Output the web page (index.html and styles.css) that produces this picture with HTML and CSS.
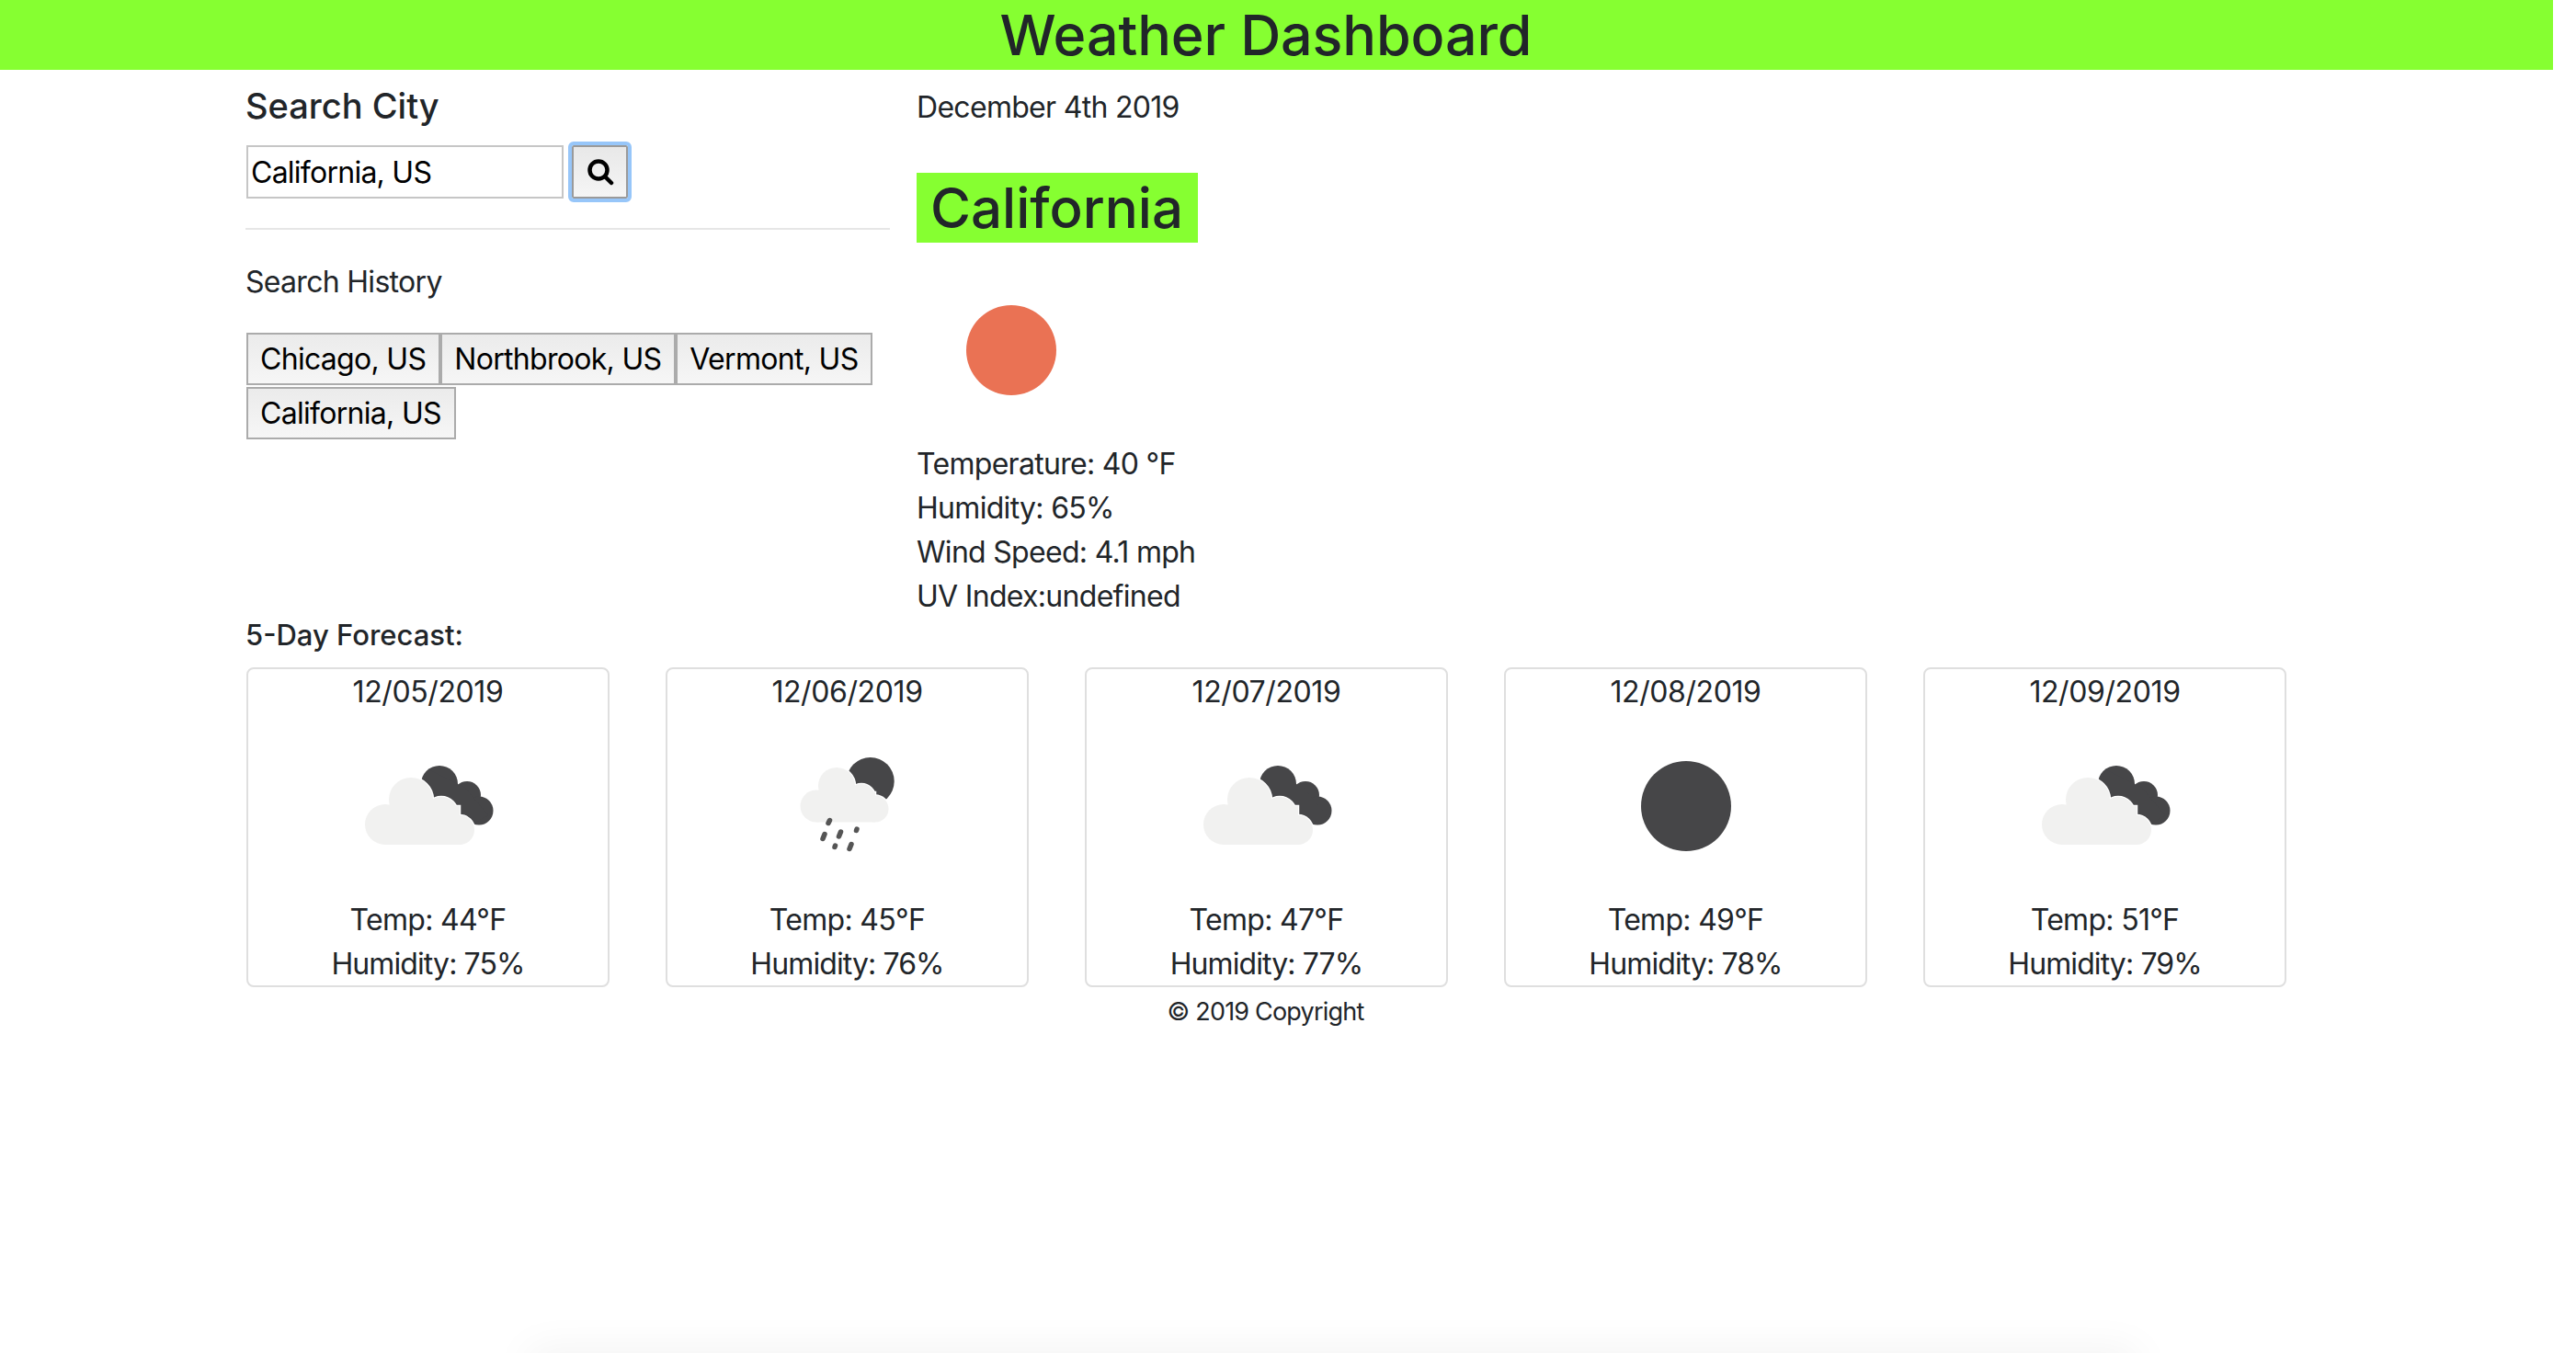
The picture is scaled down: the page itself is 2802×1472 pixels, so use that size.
FILE: index.html
```html
<!DOCTYPE html>
<html lang="en">
<head>
<meta charset="utf-8">
<title>Weather Dashboard</title>
<link rel="stylesheet" href="styles.css">
</head>
<body>
<svg class="sprites" width="0" height="0" aria-hidden="true">
  <defs>
    <g id="cloud-shape">
      <circle cx="53" cy="120" r="22"/><circle cx="81" cy="93" r="24"/><circle cx="114" cy="108" r="18"/><circle cx="134" cy="126" r="16"/>
      <rect x="53" y="100" width="81" height="42"/>
    </g>
    <symbol id="icon-clouds" viewBox="0 0 200 200">
      <g class="dark"><circle cx="112" cy="76" r="20"/><circle cx="142" cy="88" r="15"/><circle cx="155" cy="105" r="15.5"/><polygon points="100,60 140,80 165,110 130,130 90,100"/></g>
      <use href="#cloud-shape" class="halo"/>
      <use href="#cloud-shape" class="light"/>
    </symbol>
    <g id="rain-cloud-shape">
      <circle cx="66" cy="100" r="17.5"/><circle cx="88" cy="78" r="20"/><circle cx="115" cy="91" r="15"/><circle cx="130" cy="103" r="14.5"/>
      <rect x="66" y="85" width="64" height="32.5"/>
    </g>
    <symbol id="icon-rain" viewBox="0 0 200 200">
      <circle class="dark" cx="124.7" cy="73" r="26"/>
      <use href="#rain-cloud-shape" class="halo"/>
      <use href="#rain-cloud-shape" class="light"/>
      <g class="drops">
        <line x1="80.5" y1="115.5" x2="79" y2="118.5"/><line x1="75" y1="130.5" x2="73" y2="135.5"/><line x1="92.5" y1="128" x2="90.5" y2="133"/>
        <line x1="110" y1="125" x2="109.5" y2="126.5"/><line x1="86.5" y1="143" x2="86" y2="144.5"/><line x1="104" y1="141.5" x2="102" y2="146.5"/>
      </g>
    </symbol>
  </defs>
</svg>
<div class="page">
  <header class="banner"><h1 class="banner-title">Weather Dashboard</h1></header>
  <main class="content">
    <div class="top">
      <aside class="side">
        <h2 class="side-title">Search City</h2>
        <form class="search">
          <input class="search-input" type="text" value="California, US">
          <button class="search-btn" type="button" aria-label="Search">
            <svg class="search-icon" viewBox="0 0 30 30"><circle cx="13" cy="13" r="9.5"/><line x1="20" y1="20" x2="27" y2="27"/></svg>
          </button>
        </form>
        <hr class="rule">
        <p class="history-label">Search History</p>
        <div class="history">
          <button class="history-btn" type="button">Chicago, US</button><button class="history-btn" type="button">Northbrook, US</button><button class="history-btn" type="button">Vermont, US</button><button class="history-btn" type="button">California, US</button>
        </div>
      </aside>
      <section class="current">
        <p class="today">December 4th 2019</p>
        <h2 class="city">California</h2>
        <svg class="current-icon" viewBox="0 0 200 200"><circle class="sun" cx="100" cy="100" r="49"/></svg>
        <p class="stat">Temperature: 40 °F</p>
        <p class="stat">Humidity: 65%</p>
        <p class="stat">Wind Speed: 4.1 mph</p>
        <p class="stat">UV Index:undefined</p>
      </section>
    </div>
    <h3 class="forecast-title">5-Day Forecast:</h3>
    <div class="forecast">
      <article class="card"><p class="card-date">12/05/2019</p><svg class="card-icon"><use href="#icon-clouds"/></svg><p>Temp: 44°F</p><p class="card-humidity">Humidity: 75%</p></article>
      <article class="card"><p class="card-date">12/06/2019</p><svg class="card-icon"><use href="#icon-rain"/></svg><p>Temp: 45°F</p><p class="card-humidity">Humidity: 76%</p></article>
      <article class="card"><p class="card-date">12/07/2019</p><svg class="card-icon"><use href="#icon-clouds"/></svg><p>Temp: 47°F</p><p class="card-humidity">Humidity: 77%</p></article>
      <article class="card"><p class="card-date">12/08/2019</p><svg class="card-icon" viewBox="0 0 200 200"><circle class="dark" cx="100" cy="100" r="49"/></svg><p>Temp: 49°F</p><p class="card-humidity">Humidity: 78%</p></article>
      <article class="card"><p class="card-date">12/09/2019</p><svg class="card-icon"><use href="#icon-clouds"/></svg><p>Temp: 51°F</p><p class="card-humidity">Humidity: 79%</p></article>
    </div>
  </main>
  <footer class="footer">© 2019 Copyright</footer>
</div>
<div class="bottom-glow"></div>
</body>
</html>
```

FILE: styles.css
```css
* { box-sizing: border-box; }
html, body { margin: 0; padding: 0; background: #fff; }
body {
  font-family: Inter, "Liberation Sans", sans-serif;
  font-size: 32px;
  line-height: 48px;
  letter-spacing: -0.7px;
  color: #212529;
  height: 1472px;
  overflow: hidden;
}
p { margin: 0; }
.sprites { position: absolute; }
.page { width: 2777px; }
.banner { background: #86ff31; height: 76px; text-align: center; padding-right: 23px; }
.banner-title { margin: 0; font-size: 61px; line-height: 76px; font-weight: 450; letter-spacing: -0.1px; }
.content { padding: 0 0 0 267px; }
.top { display: flex; }
.side { width: 730px; }
.side-title { margin: 0; padding-top: 15px; font-size: 38px; line-height: 48px; font-weight: 500; letter-spacing: 0; }
.search { display: flex; align-items: center; margin-top: 16px; height: 64px; }
.search-input {
  width: 345px; height: 58px; margin-left: 1px;
  border: 2px solid #c6c6c6; padding: 0 3px;
  font: 32px Inter, "Liberation Sans", sans-serif; letter-spacing: -0.75px; color: #000;
}
.search-btn {
  width: 61px; height: 58px; margin-left: 9px; padding: 0;
  display: flex; align-items: center; justify-content: center;
  border: 2px solid #9a9a9a;
  background: linear-gradient(#e8e8e8, #f5f5f5);
  outline: 4px solid #97c6f9; border-radius: 2px;
}
.search-icon { width: 30px; height: 30px; fill: none; stroke: #000; stroke-width: 4.5; stroke-linecap: round; }
.rule { width: 701px; height: 2px; margin: 29px 0 0; border: 0; background: #e6e6e6; }
.history-label { margin-top: 33px; }
.history { margin-top: 31px; margin-left: 1px; width: 700px; display: flex; flex-wrap: wrap; row-gap: 2px; }
.history-btn {
  height: 57px; padding: 0 14px 0 13px;
  border: 2px solid #ababab;
  background: linear-gradient(#ebebeb, #f6f6f6);
  font: 32px Inter, "Liberation Sans", sans-serif; letter-spacing: -0.7px; color: #000;
}
.current { padding-top: 17px; }
.today { height: 48px; }
.city {
  display: table; margin: 47px 0 0; padding: 0 15px;
  background: #86ff31; font-size: 60px; line-height: 76px; font-weight: 450; letter-spacing: 0;
  width: 306px; white-space: nowrap;
}
.current-icon { display: block; width: 200px; height: 200px; margin: 17px 0 0 3px; }
.sun { fill: #ea7254; }
.forecast-title { margin: -6px 0 0; font-size: 31px; line-height: 48px; font-weight: 500; letter-spacing: 0; }
.forecast { display: flex; gap: 61px; margin-top: 11px; padding-left: 1px; }
.card {
  width: 395px; height: 348px;
  border: 2px solid #dfdfdf; border-radius: 8px;
  text-align: center; padding-top: 1px;
  display: flex; flex-direction: column; align-items: center;
}
.card-date { letter-spacing: -0.4px; }
.card-humidity { letter-spacing: -0.9px; }
.card-icon { display: block; width: 200px; height: 200px; flex: none; }
.dark { fill: #464648; }
.light { fill: #f1f1f0; }
.halo { fill: #fff; stroke: #fff; stroke-width: 2.5; }
.drops { stroke: #555; stroke-width: 5.5; stroke-linecap: round; }
.footer { text-align: center; font-size: 27px; line-height: 40px; margin-top: 7px; padding-right: 24px; letter-spacing: -0.8px; }
.bottom-glow {
  position: fixed; left: 580px; width: 1740px; bottom: -40px; height: 40px;
  box-shadow: 0 0 45px 5px rgba(0,0,0,.05);
}
```
